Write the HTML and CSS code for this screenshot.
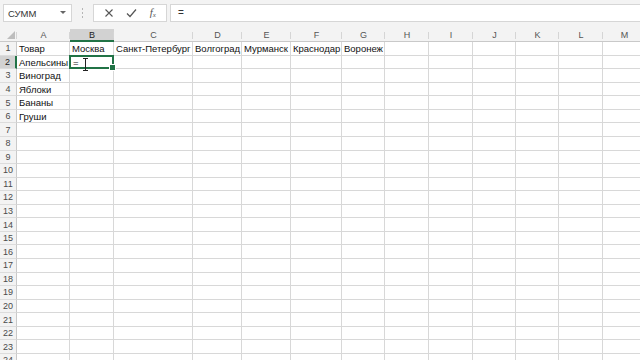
FILE: index.html
```html
<!DOCTYPE html>
<html lang="ru">
<head>
<meta charset="utf-8">
<link rel="stylesheet" href="styles.css">
</head>
<body>
<div class="app">
  <div class="fbar">
    <div class="namebox"><span>СУММ</span><svg class="dd" width="6" height="4" viewBox="0 0 6 4"><path d="M0 0h6L3 3z" fill="#666"/></svg></div>
    <div class="grip"><i></i><i></i><i></i></div>
    <div class="fbtns">
      <svg width="10" height="10" viewBox="0 0 10 10"><path d="M1.5 1.5l7 7M8.5 1.5l-7 7" stroke="#555" stroke-width="1.1" fill="none"/></svg>
      <svg width="11" height="10" viewBox="0 0 11 10"><path d="M1 5.5l3 3L10 1.5" stroke="#555" stroke-width="1.2" fill="none"/></svg>
      <span class="fx"><i>f</i><sub>x</sub></span>
    </div>
    <div class="finput">=</div>
  </div>
  <div class="sheet">
    <div class="grid" id="grid">
      <div class="ch corner"><svg width="8" height="8" viewBox="0 0 8 8"><path d="M8 0V8H0z" fill="#bdbdbd"/></svg></div>
      <div class="ch">A</div><div class="ch sel">B</div><div class="ch">C</div><div class="ch">D</div><div class="ch">E</div><div class="ch">F</div><div class="ch">G</div><div class="ch">H</div><div class="ch">I</div><div class="ch">J</div><div class="ch">K</div><div class="ch">L</div><div class="ch">M</div><div class="ch last"></div>
    </div>
    <div class="cursor"><svg width="7" height="13" viewBox="0 0 7 13"><path d="M1 0.5h5M3.5 0.5v12M1 12.5h5" stroke="#222" stroke-width="1" fill="none"/></svg></div>
  </div>
</div>
<script src="app.js"></script>
</body>
</html>
```
FILE: app.js
```js
(function () {
  var grid = document.getElementById('grid');
  var data = {
    1: ['Товар', 'Москва', 'Санкт-Петербург', 'Волгоград', 'Мурманск', 'Краснодар', 'Воронеж'],
    2: ['Апельсины', '='],
    3: ['Виноград'],
    4: ['Яблоки'],
    5: ['Бананы'],
    6: ['Груши']
  };
  var html = '';
  for (var r = 1; r <= 24; r++) {
    html += '<div class="rh' + (r === 2 ? ' sel' : '') + '">' + r + '</div>';
    var row = data[r] || [];
    for (var c = 0; c < 14; c++) {
      var cls = 'cell';
      if (r === 2 && c === 1) cls += ' active';
      if (c === 13) cls += ' last';
      html += '<div class="' + cls + '">' + (row[c] || '') + '</div>';
    }
  }
  grid.insertAdjacentHTML('beforeend', html);
})();
```
FILE: styles.css
```css
* { box-sizing: border-box; }
html, body { margin: 0; padding: 0; background: #fff; }
body { width: 640px; height: 360px; overflow: hidden; font-family: "Liberation Sans", Arial, sans-serif; }
.app { width: 640px; height: 360px; display: flex; flex-direction: column; }

.fbar { height: 29px; background: #f3f3f3; display: flex; align-items: flex-start; padding-top: 4px; padding-left: 3px; flex: none; }
.namebox { width: 69px; height: 18px; background: #fff; border: 1px solid #d6d6d6; display: flex; align-items: center; justify-content: space-between; padding: 0 5px 0 4px; font-size: 9.5px; color: #333; }
.grip { width: 21px; height: 18px; display: flex; flex-direction: column; align-items: center; justify-content: center; gap: 2px; }
.grip i { display: block; width: 1px; height: 2px; background: #b5b5b5; }
.fbtns { width: 74px; height: 18px; background: #fff; border: 1px solid #d6d6d6; display: flex; align-items: center; justify-content: space-around; padding: 0 4px; }
.fx { font-family: "Liberation Serif", serif; font-size: 11px; color: #555; line-height: 1; }
.fx sub { font-size: 7px; font-style: italic; vertical-align: -1px; }
.finput { flex: 1; height: 18px; margin-left: 3px; background: #fff; border: 1px solid #d6d6d6; border-right: none; font-size: 10px; color: #333; padding-left: 7px; line-height: 16px; }

.sheet { position: relative; flex: 1; overflow: hidden; }
.grid { display: grid; grid-template-columns: 17px 53px 44px 79px 49px 49px 51px 43px 44px 44px 43px 43px 44px 43px 40px; grid-template-rows: 13px repeat(24, 13.57px); }
.ch { background: #f3f3f3; border-bottom: 1px solid #c9c9c9; font-size: 9px; color: #555; display: flex; align-items: center; justify-content: center; position: relative; }
.ch::after { content: ""; position: absolute; right: 0; top: 3px; bottom: 2px; width: 1px; background: #d5d5d5; }
.ch.corner { justify-content: flex-end; align-items: flex-end; padding: 0 2px 2px 0; }
.ch.sel { background: #d2d2d2; color: #222; border-bottom: 2px solid #217346; }
.ch.last::after { display: none; }
.rh { background: #f3f3f3; border-right: 1px solid #c9c9c9; border-bottom: 1px solid #dcdcdc; font-size: 9px; color: #4a4a4a; display: flex; align-items: center; justify-content: center; }
.rh.sel { background: #d2d2d2; color: #222; border-right: 2px solid #217346; }
.cell { border-right: 1px solid #d8d8d8; border-bottom: 1px solid #d8d8d8; font-size: 9.5px; color: #111; padding: 0 2px; white-space: nowrap; overflow: visible; line-height: 13px; position: relative; }
.cell.active { border: 2px solid #217346; margin: -1px 0 0 -1px; padding-left: 2px; line-height: 11px; z-index: 2; }
.cell.active::after { content: ""; position: absolute; right: -4px; bottom: -4px; width: 5px; height: 5px; background: #217346; border: 1px solid #fff; }
.cursor { position: absolute; left: 82px; top: 28px; z-index: 3; }
```
